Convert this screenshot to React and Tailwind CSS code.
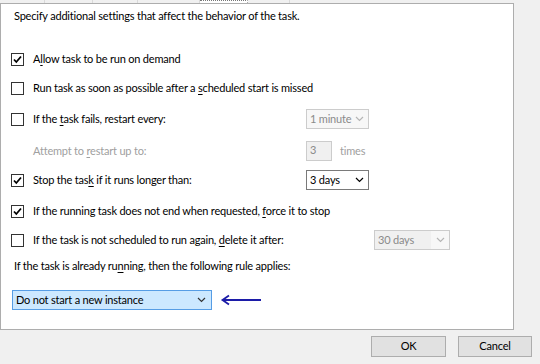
import React from "react";

const font = { fontFamily: '"Segoe UI", Lato, "Noto Sans", sans-serif' };

function Check({ checked }) {
  return (
    <div className="w-[13px] h-[13px] border border-[#333333] bg-white flex items-center justify-center shrink-0">
      {checked && (
        <svg width="11" height="11" viewBox="0 0 11 11">
          <path d="M2 5.5 L4.3 8 L9 2.5" fill="none" stroke="#000" strokeWidth="1.8" />
        </svg>
      )}
    </div>
  );
}

function Chevron({ color = "#000" }) {
  return (
    <svg width="9" height="6" viewBox="0 0 9 6" className="shrink-0">
      <path d="M1 1 L4.5 4.5 L8 1" fill="none" stroke={color} strokeWidth="1.2" />
    </svg>
  );
}

function Row({ checked, children, className = "", control }) {
  return (
    <div className={"flex items-center h-[20px] " + className}>
      <div className="flex items-center w-[305px] pl-[10px]">
        {checked !== undefined ? <Check checked={checked} /> : <div className="w-[13px]" />}
        <span className="ml-[9px] whitespace-nowrap">{children}</span>
      </div>
      {control}
    </div>
  );
}

function U({ children }) {
  return <span className="underline underline-offset-2">{children}</span>;
}

export default function App() {
  return (
    <div
      className="w-[540px] h-[364px] bg-[#f0f0f0] text-[11px] tracking-[-0.2px] text-black overflow-hidden"
      style={font}
    >
      {/* tab strip bottoms */}
      <div className="flex h-[3px] w-[514px]">
        <div className="w-[45px] border-r border-[#d9d9d9]" />
        <div className="w-[48px] border-r border-[#d9d9d9]" />
        <div className="w-[45px] border-r border-[#d9d9d9]" />
        <div className="w-[62px] border-r border-[#d9d9d9]" />
        <div className="w-[48px] bg-white border-r border-[#adadad] border-t border-dotted border-t-[#777]" />
        <div className="w-[42px] border-r border-[#d9d9d9]" />
        <div className="flex-1" />
      </div>

      {/* panel */}
      <div className="w-[514px] h-[327px] bg-white border border-[#adadad] flex flex-col">
        <div className="h-[20px] mt-[2px] pl-[13px] flex items-center">
          Specify additional settings that affect the behavior of the task.
        </div>

        <Row checked className="mt-[23px]">
          A<U>l</U>low task to be run on demand
        </Row>
        <Row checked={false} className="mt-[9px]">
          Run task as soon as possible after a <U>s</U>cheduled start is missed
        </Row>
        <Row
          checked={false}
          className="mt-[11px]"
          control={
            <div className="w-[63px] h-[20px] border border-[#cccccc] bg-[#f7f7f7] flex items-center justify-between pl-[3px] pr-[4px] text-[#8a8a8a] whitespace-nowrap">
              <span>1 minute</span>
              <Chevron color="#b5b5b5" />
            </div>
          }
        >
          If the <U>t</U>ask fails, restart every:
        </Row>
        <div className="flex items-center h-[20px] mt-[12px]">
          <div className="w-[305px] pl-[32px] text-[#a0a0a0]">
            Attempt to <U>r</U>estart up to:
          </div>
          <div className="w-[26px] h-[20px] border border-[#cccccc] bg-[#f0f0f0] pl-[3px] text-[#8a8a8a] leading-[16px]">3</div>
          <span className="ml-[8px] text-[#a0a0a0]">times</span>
        </div>
        <Row
          checked
          className="mt-[9px]"
          control={
            <div className="w-[63px] h-[20px] border border-[#7a7a7a] bg-white flex items-center justify-between pl-[3px] pr-[4px] whitespace-nowrap">
              <span>3 days</span>
              <Chevron />
            </div>
          }
        >
          Stop the tas<U>k</U> if it runs longer than:
        </Row>
        <Row checked className="mt-[11px]">
          If the running task does not end when requested, <U>f</U>orce it to stop
        </Row>
        <div className="flex items-center h-[20px] mt-[9px]">
          <div className="flex items-center w-[373px] pl-[10px]">
            <Check checked={false} />
            <span className="ml-[9px] whitespace-nowrap">
              If the task is not scheduled to run again, <U>d</U>elete it after:
            </span>
          </div>
          <div className="w-[76px] h-[20px] border border-[#cccccc] bg-[#f0f0f0] flex items-center text-[#8a8a8a] whitespace-nowrap">
            <span className="pl-[3px] flex-1">30 days</span>
            <div className="w-[18px] h-full bg-[#f7f7f7] flex items-center justify-center">
              <Chevron color="#b5b5b5" />
            </div>
          </div>
        </div>
        <div className="h-[20px] mt-[6px] pl-[13px] flex items-center">
          If the task is already ru<U>n</U>ning, then the following rule applies:
        </div>
        <div className="flex items-center mt-[14px] pl-[11px]">
          <div className="w-[200px] h-[20px] border border-[#569de5] bg-[#cce8ff] flex items-center justify-between pl-[3px] pr-[5px]">
            <span>Do not start a new instance</span>
            <Chevron color="#333" />
          </div>
          <svg width="44" height="12" viewBox="0 0 44 12" className="ml-[8px]">
            <path d="M3 6 L41 6" stroke="#1c1ca8" strokeWidth="1.8" />
            <path d="M9 1.5 L2.5 6 L9 10.5" fill="none" stroke="#1c1ca8" strokeWidth="1.8" />
          </svg>
        </div>
      </div>

      {/* buttons */}
      <div className="flex justify-end gap-[12px] pr-[8px] mt-[6px]">
        <button className="w-[75px] h-[21px] border border-[#adadad] bg-[#e1e1e1]">OK</button>
        <button className="w-[74px] h-[21px] border border-[#adadad] bg-[#e1e1e1]">Cancel</button>
      </div>
    </div>
  );
}
